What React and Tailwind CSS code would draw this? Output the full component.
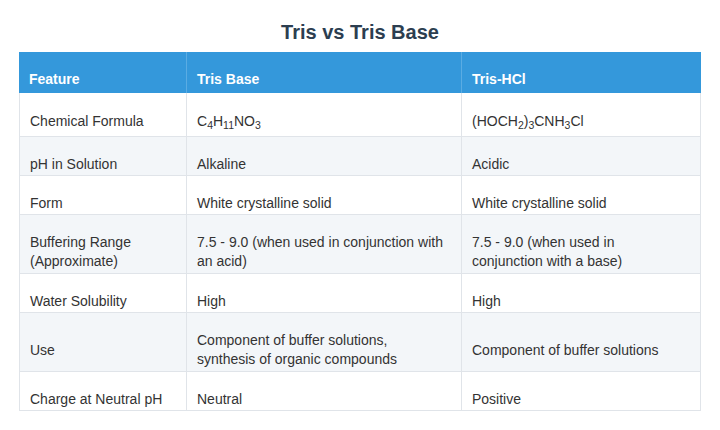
import React from "react";

const rows = [
  {
    f: "Chemical Formula",
    a: (
      <>
        C<sub>4</sub>H<sub>11</sub>NO<sub>3</sub>
      </>
    ),
    b: (
      <>
        (HOCH<sub>2</sub>)<sub>3</sub>CNH<sub>3</sub>Cl
      </>
    ),
    pad: "pt-[19px] pb-[5px]",
  },
  { f: "pH in Solution", a: "Alkaline", b: "Acidic", pad: "pt-[18px] pb-[1px]" },
  { f: "Form", a: "White crystalline solid", b: "White crystalline solid", pad: "pt-[18px] pb-[1px]" },
  {
    f: "Buffering Range (Approximate)",
    a: "7.5 - 9.0 (when used in conjunction with an acid)",
    b: "7.5 - 9.0 (when used in conjunction with a base)",
    pad: "pt-[18px] pb-[2px]",
  },
  { f: "Water Solubility", a: "High", b: "High", pad: "pt-[18px] pb-[1px]" },
  {
    f: "Use",
    a: "Component of buffer solutions, synthesis of organic compounds",
    b: "Component of buffer solutions",
    pad: "pt-[18px] pb-[2px]",
  },
  { f: "Charge at Neutral pH", a: "Neutral", b: "Positive", pad: "pt-[18px] pb-[1px]" },
];

export default function App() {
  return (
    <div className="w-[720px] h-[430px] overflow-hidden bg-white font-['Liberation_Sans',Arial,Helvetica,sans-serif]">
      <h1 className="pt-[20px] text-center text-[20px] font-bold leading-[24px] text-[#2c3e50]">
        Tris vs Tris Base
      </h1>
      <table className="mt-[8px] ml-[19px] w-[682px] table-fixed border-separate border-spacing-0 text-[14px] leading-[19px]">
        <colgroup>
          <col className="w-[168px]" />
          <col className="w-[275px]" />
          <col className="w-[239px]" />
        </colgroup>
        <thead>
          <tr className="bg-[#3498db] text-left text-white">
            <th className="border-r border-[#5aacE3] pl-[10px] pr-[12px] pt-[18px] pb-[4px] font-bold align-middle">
              Feature
            </th>
            <th className="border-r border-[#5aace3] pl-[10px] pr-[12px] pt-[18px] pb-[4px] font-bold align-middle">
              Tris Base
            </th>
            <th className="pl-[10px] pr-[12px] pt-[18px] pb-[4px] font-bold align-middle">
              Tris-HCl
            </th>
          </tr>
        </thead>
        <tbody className="text-[#333333]">
          {rows.map((r, i) => (
            <tr key={i} className={i % 2 === 1 ? "bg-[#f3f6f9]" : "bg-white"}>
              <td className={`border-l border-r border-b border-[#e0e4e9] pl-[10px] pr-[12px] align-middle ${r.pad}`}>
                {r.f}
              </td>
              <td className={`border-r border-b border-[#e0e4e9] pl-[10px] pr-[12px] align-middle ${r.pad}`}>
                {r.a}
              </td>
              <td className={`border-r border-b border-[#e0e4e9] pl-[10px] pr-[14px] align-middle ${r.pad}`}>
                {r.b}
              </td>
            </tr>
          ))}
        </tbody>
      </table>
    </div>
  );
}
